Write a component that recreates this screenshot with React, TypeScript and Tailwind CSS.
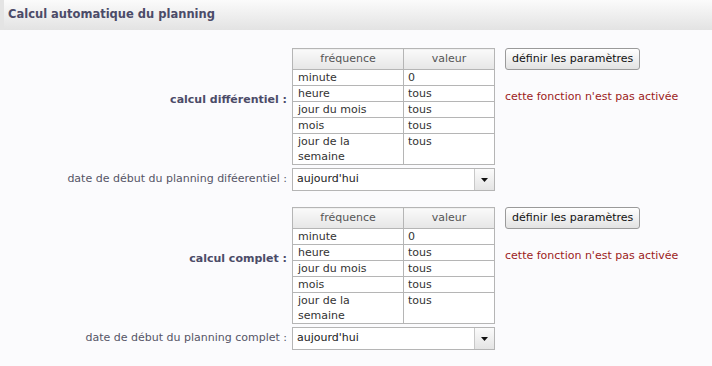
import React from 'react';

const rows: [string, string][] = [
  ['minute', '0'],
  ['heure', 'tous'],
  ['jour du mois', 'tous'],
  ['mois', 'tous'],
  ['jour de la semaine', 'tous'],
];

function FreqTable() {
  return (
    <table className="w-[203px] border-collapse text-[11px] text-[#333]">
      <thead>
        <tr className="h-[21px]">
          <th className="w-[111px] border border-[#b5b5b5] bg-gradient-to-b from-[#fafafa] to-[#e6e6e6] font-normal text-[#555]">fréquence</th>
          <th className="border border-[#b5b5b5] bg-gradient-to-b from-[#fafafa] to-[#e6e6e6] font-normal text-[#555]">valeur</th>
        </tr>
      </thead>
      <tbody className="bg-white">
        {rows.map(([k, v]) => (
          <tr key={k}>
            <td className="border border-[#b5b5b5] px-[5px] py-0 align-top leading-[15px]">
              {k === 'jour de la semaine' ? (
                <>jour de la<br />semaine</>
              ) : (
                k
              )}
            </td>
            <td className="border border-[#b5b5b5] px-[4px] py-0 align-top leading-[15px]">{v}</td>
          </tr>
        ))}
      </tbody>
    </table>
  );
}

function Select() {
  return (
    <div className="flex h-[23px] w-[203px] border border-[#b5b5b5] bg-white text-[11px] text-[#222]">
      <div className="flex flex-1 items-center px-[4px]">aujourd'hui</div>
      <div className="flex w-[20px] items-center justify-center border-l border-[#c8c8c8] bg-gradient-to-b from-[#fbfbfb] to-[#e4e4e4]">
        <svg width="7" height="4" viewBox="0 0 7 4">
          <path d="M0 0 H7 L3.5 4 Z" fill="#111" />
        </svg>
      </div>
    </div>
  );
}

function Block({ title, dateLabel }: { title: string; dateLabel: string }) {
  return (
    <div className="flex flex-col gap-[3px]">
      <div className="flex">
        <div className="flex w-[292px] items-center justify-end pr-[5px] pb-[12px] text-[11px] font-bold text-[#4b4b68]">
          {title}
        </div>
        <FreqTable />
        <div className="flex flex-col items-start pl-[10px]">
          <button className="h-[22px] rounded-[3px] border border-[#9a9a9a] bg-gradient-to-b from-[#ffffff] to-[#e2e2e2] px-[6px] text-[11px] text-[#111]">
            définir les paramètres
          </button>
          <div className="mt-[19px] pl-[-2px] text-[11px] text-[#9b1b1b]">cette fonction n'est pas activée</div>
        </div>
      </div>
      <div className="flex items-center">
        <div className="w-[292px] pr-[5px] text-right text-[11px] text-[#555566]">{dateLabel}</div>
        <Select />
      </div>
    </div>
  );
}

export default function App() {
  return (
    <div className="h-[366px] w-[712px] bg-[#fbfbfd] font-['Tahoma','DejaVu_Sans',sans-serif]">
      <div className="flex h-[30px] items-center border-l-[4px] border-[#e4e4e4] bg-gradient-to-b from-[#fbfbfb] to-[#e3e3e3] pl-[4px] text-[11.5px] font-bold text-[#4b4b68]">
        Calcul automatique du planning
      </div>
      <div className="flex flex-col gap-[16px] pt-[18px]">
        <Block title="calcul différentiel :" dateLabel="date de début du planning diféerentiel :" />
        <Block title="calcul complet :" dateLabel="date de début du planning complet :" />
      </div>
    </div>
  );
}
